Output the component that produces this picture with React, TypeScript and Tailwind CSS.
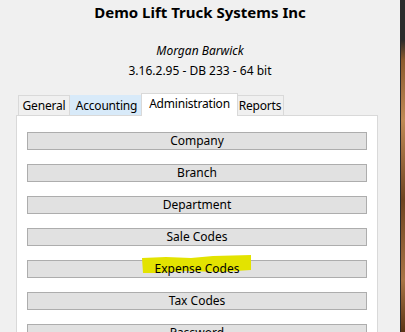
import React from "react"

const buttons = ["Company", "Branch", "Department", "Sale Codes", "Expense Codes", "Tax Codes", "Password"]

const font = { fontFamily: '"Segoe UI", "Noto Sans", "Open Sans", sans-serif' }

function Tab({ label, width, active, hover }: { label: string; width: string; active?: boolean; hover?: boolean }) {
  if (active) {
    return (
      <div
        className={
          "relative z-10 -mb-px -mx-[2px] flex h-[23px] justify-center border border-b-0 border-[#d9d9d9] bg-white pt-[1px] text-[12px] leading-[18px] tracking-[-0.2px] text-black " +
          width
        }
      >
        {label}
      </div>
    )
  }
  return (
    <div
      className={
        "flex h-[20px] justify-center border border-b-0 pt-[2px] text-[12px] leading-[16px] tracking-[-0.2px] text-black " +
        width +
        (hover ? " border-[#d8eaf9] bg-[#d8eaf9]" : " border-[#d9d9d9] bg-[#f0f0f0]")
      }
    >
      {label}
    </div>
  )
}

export default function App() {
  return (
    <div className="flex h-[332px] w-[405px] overflow-hidden" style={font}>
      <div className="flex w-[400px] flex-col bg-[#f0f0f0]">
        <div className="pt-[2px] text-center text-[15px] font-bold leading-[20px] text-black">
          Demo Lift Truck Systems Inc
        </div>
        <div className="mt-[19px] text-center text-[12px] italic leading-[20px] text-black">Morgan Barwick</div>
        <div className="text-center text-[12px] leading-[20px] text-black">3.16.2.95 - DB 233 - 64 bit</div>

        <div className="mt-[12px] flex items-end pl-[18px]">
          <Tab label="General" width="w-[52px]" />
          <Tab label="Accounting" width="w-[73px]" hover />
          <Tab label="Administration" width="w-[97px]" active />
          <Tab label="Reports" width="w-[48px]" />
        </div>

        <div className="ml-[16px] flex w-[362px] flex-1 flex-col gap-[14px] border border-[#d9d9d9] bg-white px-[10px] pt-[16px]">
          {buttons.map((b) => (
            <div
              key={b}
              className="flex h-[18px] shrink-0 items-center justify-center border border-[#adadad] bg-[#e1e1e1] text-[12px] text-black"
            >
              {b === "Expense Codes" ? (
                <span className="relative">
                  <svg
                    className="absolute left-[-14px] top-[-5px]"
                    width="111"
                    height="19"
                    viewBox="0 0 111 19"
                  >
                    <path d="M1 3 L25 2 L50 3 L72 1 L110 0 L110 15 L80 17 L45 16 L18 18 L2 18 Z" fill="#e3e300" />
                  </svg>
                  <span className="relative">{b}</span>
                </span>
              ) : (
                b
              )}
            </div>
          ))}
        </div>
      </div>
      <div className="w-[5px] border-l border-[#2b2b2b] bg-[linear-gradient(180deg,#2b2b2b_0px,#2b2b2b_40px,#8a5a2e_60px,#c08a55_120px,#6e4320_200px,#a87446_280px,#5a3415_332px)]" />
    </div>
  )
}
